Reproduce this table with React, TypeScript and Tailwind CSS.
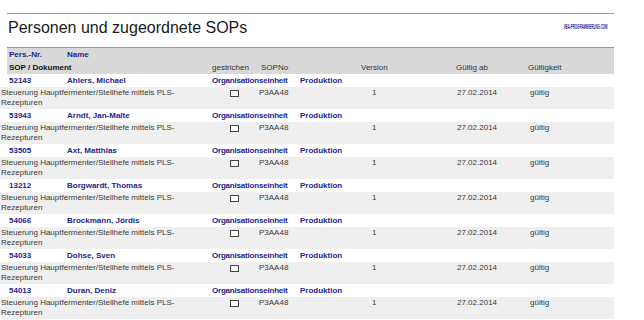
const people = [
  { nr: "52143", name: "Ahlers, Michael" },
  { nr: "53943", name: "Arndt, Jan-Malte" },
  { nr: "53505", name: "Axt, Matthias" },
  { nr: "13212", name: "Borgwardt, Thomas" },
  { nr: "54066", name: "Brockmann, Jördis" },
  { nr: "54033", name: "Dohse, Sven" },
  { nr: "54013", name: "Duran, Deniz" },
];

const PersonBlock = ({ nr, name }: { nr: string; name: string }) => {
  return (
    <div>
      <div className="flex h-[13px] items-center pl-[9px] text-[8px] font-bold text-[#24248f]">
        <span className="w-[58px]">{nr}</span>
        <span className="w-[145px]">{name}</span>
        <span className="w-[88px] tracking-[-0.2px]">Organisationseinheit</span>
        <span>Produktion</span>
      </div>
      <div className="flex h-[22px] w-[614px] items-start bg-[#efefef] pt-[1px] text-[8px] leading-[10px] text-[#3a3a3a]">
        <div className="w-[212px] pl-[1px] pr-[8px]">
          Steuerung Hauptfermenter/Stellhefe mittels PLS-Rezepturen
        </div>
        <div className="w-[47px] pt-[2px]">
          <div className="ml-[18px] h-[7px] w-[9px] border border-[#444] bg-white" />
        </div>
        <div className="w-[113px]">P3AA48</div>
        <div className="w-[85px]">1</div>
        <div className="w-[73px]">27.02.2014</div>
        <div>gültig</div>
      </div>
    </div>
  );
};

export default function App() {
  return (
    <div className="h-[320px] w-[644px] overflow-hidden bg-white pt-[13px] font-['Liberation_Sans',Arial,sans-serif]">
      <div className="ml-[7px] w-[607px] border-t border-[#999]" />
      <div className="ml-[8px] mt-[4px] flex w-[602px] items-start justify-between">
        <h1 className="text-[16px] leading-[20px] text-[#1a1a1a]">Personen und zugeordnete SOPs</h1>
        <span className="mr-[3px] mt-[4px] origin-right scale-x-[0.45] text-[6.5px] font-bold text-[#2a2a9a]">
          VBA-PROGRAMMIERUNG.COM
        </span>
      </div>
      <div className="ml-[7px] mt-[9px] h-[27px] w-[607px] border-t border-[#999] bg-[#d9d9d9] text-[8px]">
        <div className="flex h-[13px] items-center pl-[2px] font-bold text-[#24248f]">
          <span className="w-[58px]">Pers.-Nr.</span>
          <span>Name</span>
        </div>
        <div className="flex h-[13px] items-center pl-[2px] text-[#333]">
          <span className="w-[203px] font-bold text-[#111]">SOP / Dokument</span>
          <span className="w-[49px]">gestrichen</span>
          <span className="w-[100px]">SOPNo</span>
          <span className="w-[95px]">Version</span>
          <span className="w-[72px]">Gültig ab</span>
          <span>Gültigkeit</span>
        </div>
      </div>
      {people.map((p) => (
        <PersonBlock key={p.nr} nr={p.nr} name={p.name} />
      ))}
    </div>
  );
}
